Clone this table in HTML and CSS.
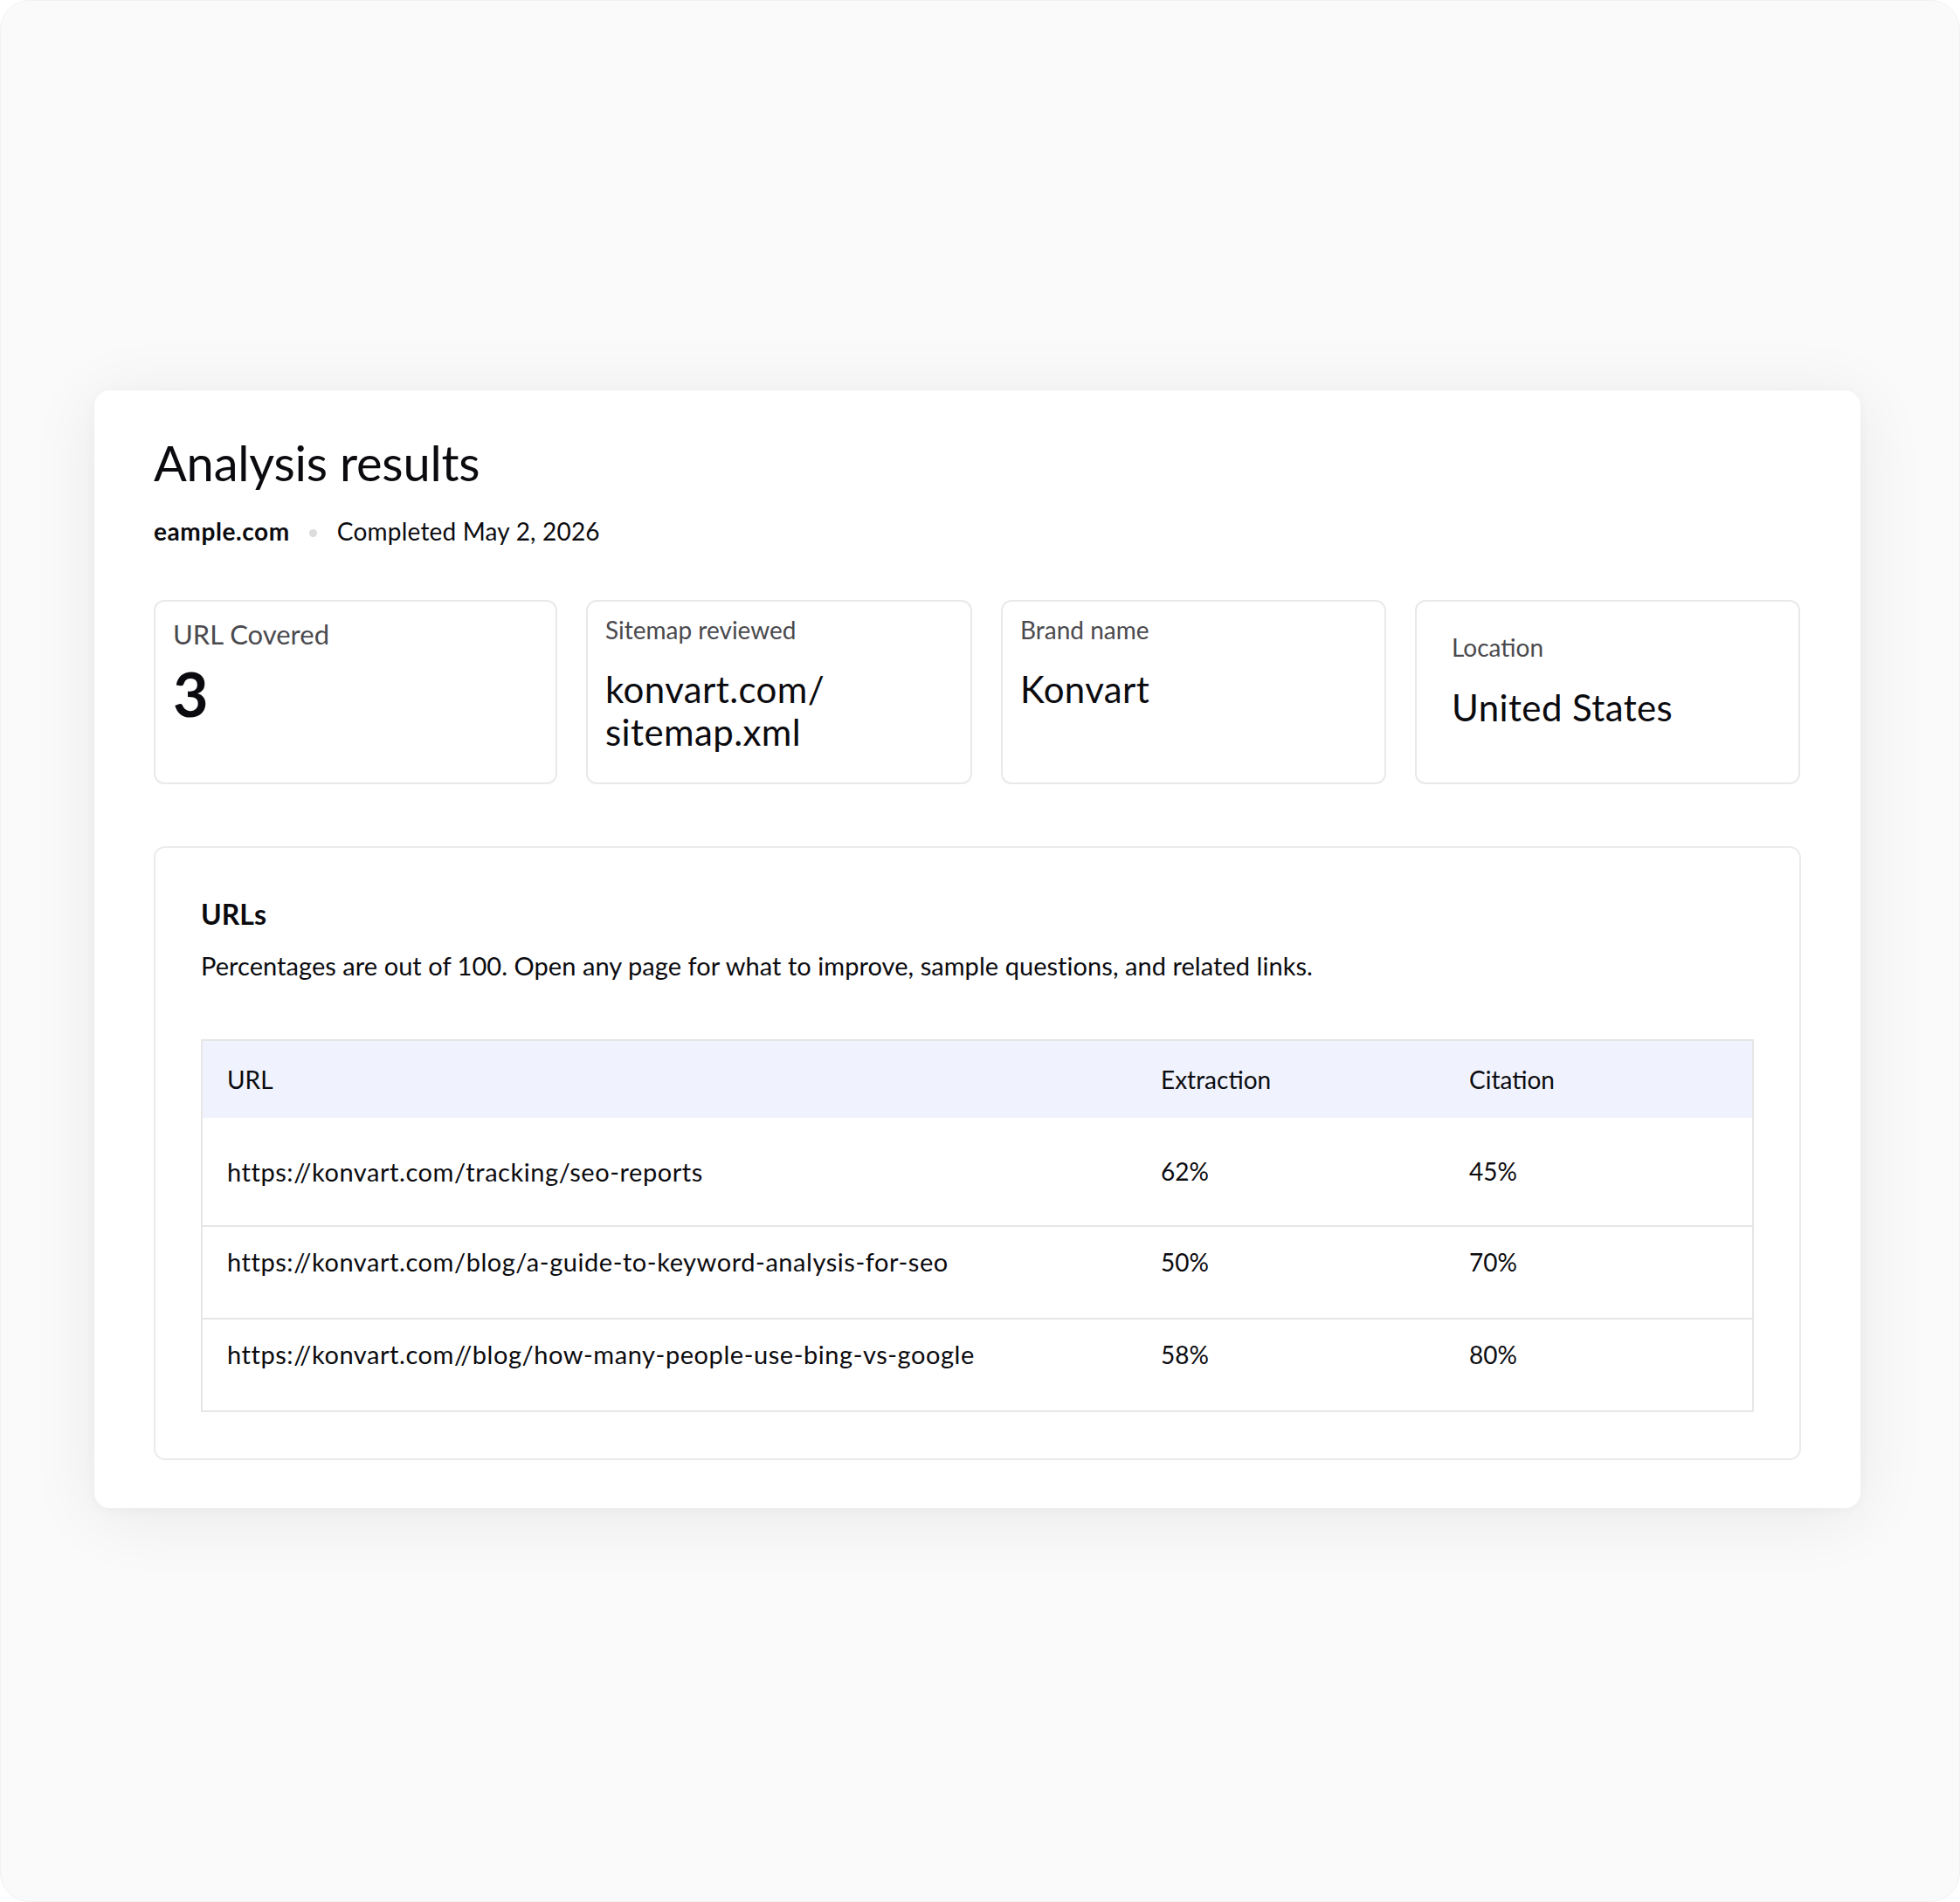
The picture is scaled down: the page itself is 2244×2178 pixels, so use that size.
FILE: index.html
```html
<!DOCTYPE html>
<html lang="en">
<head>
<meta charset="utf-8">
<title>Analysis results</title>
<link rel="stylesheet" href="styles.css">
</head>
<body>
<div class="frame">
  <main class="card">
    <header class="head">
      <h1 class="title">Analysis results</h1>
      <div class="meta">
        <span class="domain">eample.com</span>
        <span class="dot"></span>
        <span class="date">Completed May 2, 2026</span>
      </div>
    </header>

    <section class="stats">
      <div class="stat stat-count">
        <div class="stat-label stat-label-lg">URL Covered</div>
        <div class="stat-number">3</div>
      </div>
      <div class="stat">
        <div class="stat-label">Sitemap reviewed</div>
        <div class="stat-value">konvart.com/<br>sitemap.xml</div>
      </div>
      <div class="stat">
        <div class="stat-label">Brand name</div>
        <div class="stat-value">Konvart</div>
      </div>
      <div class="stat stat-wide-pad">
        <div class="stat-label">Location</div>
        <div class="stat-value">United States</div>
      </div>
    </section>

    <section class="panel">
      <h2 class="panel-title">URLs</h2>
      <p class="panel-desc">Percentages are out of 100. Open any page for what to improve, sample questions, and related links.</p>
      <table class="urls">
        <thead>
          <tr>
            <th class="col-url">URL</th>
            <th class="col-num">Extraction</th>
            <th class="col-num">Citation</th>
          </tr>
        </thead>
        <tbody>
          <tr class="first">
            <td class="url">https://konvart.com/tracking/seo-reports</td>
            <td>62%</td>
            <td>45%</td>
          </tr>
          <tr>
            <td class="url">https://konvart.com/blog/a-guide-to-keyword-analysis-for-seo</td>
            <td>50%</td>
            <td>70%</td>
          </tr>
          <tr>
            <td class="url">https://konvart.com//blog/how-many-people-use-bing-vs-google</td>
            <td>58%</td>
            <td>80%</td>
          </tr>
        </tbody>
      </table>
    </section>
  </main>
</div>
</body>
</html>
```

FILE: styles.css
```css
* { box-sizing: border-box; }

html, body {
  margin: 0;
  padding: 0;
  background: #ffffff;
}

body {
  font-family: "Lato", "Liberation Sans", sans-serif;
  color: #0b0b0f;
}

.frame {
  width: 2244px;
  height: 2178px;
  background: #fafafa;
  border: 1px solid #f1f1f1;
  border-radius: 34px;
  padding: 446px 0 0 107px;
  overflow: hidden;
}

.card {
  width: 2022px;
  background: #ffffff;
  border-radius: 18px;
  box-shadow: 0 10px 80px rgba(0, 0, 0, 0.075), 0 2px 14px rgba(0, 0, 0, 0.03);
  padding: 49px 68px 55px 68px;
}

.title {
  margin: 0;
  font-size: 56px;
  line-height: 1.2;
  font-weight: 400;
  letter-spacing: -0.2px;
}

.meta {
  margin-top: 29px;
  display: flex;
  align-items: center;
  font-size: 28px;
  line-height: 1.2;
}

.domain {
  font-weight: 700;
  letter-spacing: 0.6px;
}

.date {
  letter-spacing: 0.2px;
}

.dot {
  width: 9px;
  height: 9px;
  border-radius: 50%;
  background: #dcdcdc;
  margin: 4px 23px 0 22px;
}

.stats {
  margin-top: 61px;
  display: grid;
  grid-template-columns: 462px 442px 441px 441px;
  column-gap: 33px;
}

.stat {
  height: 211px;
  border: 2px solid #e9e9e9;
  border-radius: 12px;
  padding: 16px 20px;
}

.stat-wide-pad {
  padding: 36px 40px;
}

.stat-label {
  font-size: 28px;
  line-height: 1.2;
  color: #4a4a4e;
}

.stat-label-lg {
  font-size: 31px;
  padding-top: 3px;
}

.stat-value {
  margin-top: 27px;
  font-size: 42px;
  line-height: 49px;
  color: #0b0b0f;
  letter-spacing: 0.4px;
}

.stat-wide-pad .stat-value {
  margin-top: 28px;
}

.stat-number {
  margin-top: 11px;
  font-size: 70px;
  line-height: 1.1;
  font-weight: 700;
}

.panel {
  margin-top: 71px;
  border: 2px solid #ebebeb;
  border-radius: 13px;
  padding: 57px 52px 53px 52px;
}

.panel-title {
  margin: 0;
  font-size: 32px;
  line-height: 1.2;
  font-weight: 700;
}

.panel-desc {
  margin: 23px 0 0 0;
  font-size: 29px;
  line-height: 1.2;
  letter-spacing: 0.05px;
}

.urls {
  margin-top: 66px;
  width: 100%;
  border-collapse: collapse;
  border: 2px solid #e6e6e6;
  font-size: 28px;
}

.urls th {
  background: #f0f3fd;
  height: 89px;
  text-align: left;
  font-weight: 400;
  padding: 0 28px;
  vertical-align: middle;
}

.urls th.col-url { width: 1070px; }
.urls th.col-num { width: 353px; }

.urls td {
  height: 106px;
  padding: 0 28px 24px 28px;
  vertical-align: middle;
  border-top: 2px solid #e6e6e6;
}

.urls td.url {
  font-size: 29px;
  letter-spacing: 0.55px;
}

.urls tr.first td {
  height: 124px;
  border-top: none;
  padding-bottom: 0;
}
```
